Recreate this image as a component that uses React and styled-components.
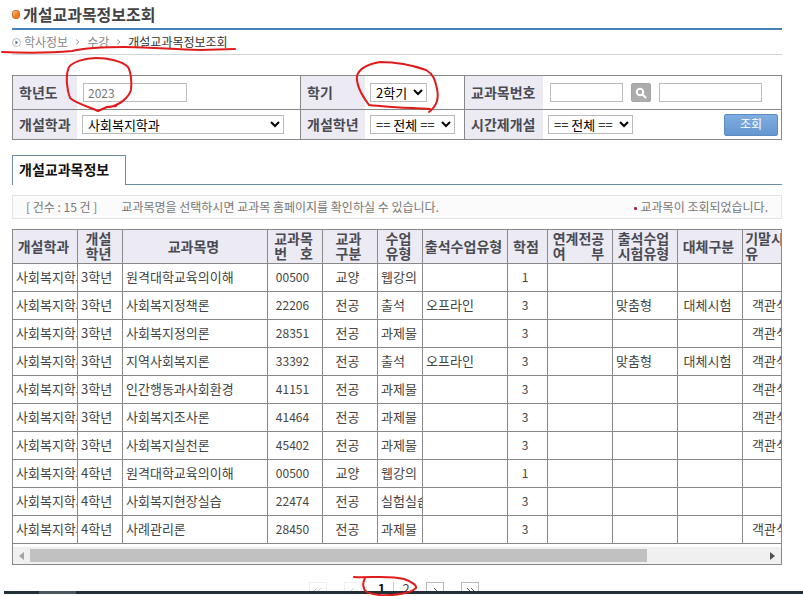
import React from 'react';
import styled, { createGlobalStyle } from 'styled-components';

const GlobalStyle = createGlobalStyle`
    * { box-sizing: border-box; }
    body {
        margin: 0;
        background: #fff;
        overflow: hidden;
    }
    body, input, select, button {
        font-family: "Noto Sans CJK KR", "Liberation Sans", sans-serif;
        font-size: 13px;
        line-height: 16px;
        color: #444;
    }
`;

const Page = styled.div`
    position: relative;
    height: 100vh;
    overflow: hidden;
`;

const Content = styled.main`
    padding: 0 21px 0 12px;
`;

const Title = styled.h1`
    display: flex;
    align-items: center;
    gap: 3px;
    height: 30px;
    margin: 0;
    border-bottom: 2px solid #4680b8;
    font-size: 16px;
    line-height: 28px;
    color: #444;
`;

const Bullet = styled.i`
    width: 8px;
    height: 9px;
    border: 1px solid #c8702c;
    border-radius: 3px;
    background: linear-gradient(135deg, #ffc48a, #ee7c22 60%);
`;

const Breadcrumb = styled.nav`
    display: flex;
    align-items: center;
    gap: 7px;
    height: 25px;
    border-bottom: 1px solid #d5d5d5;
    font-size: 12px;
    color: #888;

    a { color: inherit; text-decoration: none; }
    svg { flex: none; }
    > svg:first-child { margin-right: -4px; }
    strong { font-weight: normal; color: #333; }
`;

const SearchForm = styled.form`
    display: grid;
    grid-template-columns: 64px 223px 1px 64px 100px 78px 1fr;
    grid-template-rows: 33px 29px;
    row-gap: 1px;
    margin-top: 20px;
    border: 1px solid #888;
    background: linear-gradient(#888, #888) 0 33px / 100% 1px no-repeat;
`;

const Label = styled.label`
    display: flex;
    align-items: center;
    padding: 0 0 2px 6px;
    background: #ecebf4;
    font-size: 14px;
    font-weight: bold;
    white-space: nowrap;
    color: #4a4a52;
`;

const Field = styled.div`
    display: flex;
    align-items: center;
    gap: 8px;
    padding: 0 3px 0 ${p => p.$pad || 5}px;
    border-right: ${p => (p.$last ? 'none' : '1px solid #888')};
    ${p => p.$wide && 'grid-column: span 2;'}
`;

const TextBox = styled.input`
    width: ${p => p.$w}px;
    height: 19px;
    padding: 0 4px;
    border: 1px solid #bbb;
    font-size: 12px;
    color: #777;
`;

const SelectBox = styled.div`
    position: relative;
    width: ${p => p.$w}px;
    height: 19px;

    select {
        appearance: none;
        display: block;
        width: 100%;
        height: 19px;
        padding: 0 0 0 5px;
        border: 1px solid #bbb;
        border-radius: 0;
        background: #fff;
        line-height: 16px;
        color: #000;
    }

    svg {
        position: absolute;
        top: 6px;
        right: 4px;
        pointer-events: none;
    }
`;

const IconButton = styled.button`
    display: flex;
    align-items: center;
    justify-content: center;
    width: 20px;
    height: 19px;
    padding: 0;
    border: 1px solid #a5a5a5;
    border-radius: 2px;
    background: #adadad;
`;

const SubmitButton = styled.button`
    width: 54px;
    height: 22px;
    margin-left: auto;
    padding: 0 0 2px;
    border: 1px solid #5b8cc4;
    border-radius: 2px;
    background: linear-gradient(#7fade0, #6497d0);
    font-size: 12px;
    color: #fff;
`;

const TabBar = styled.div`
    display: flex;
    margin-top: 15px;

    &::after {
        content: '';
        flex: 1;
        border-bottom: 1px solid #6d8ba3;
    }
`;

const Tab = styled.button`
    width: 114px;
    height: 30px;
    padding: 0 0 4px 6px;
    border: 1px solid #6d8ba3;
    border-bottom: none;
    background: #fff;
    text-align: left;
    white-space: nowrap;
    font-size: 14px;
    font-weight: bold;
    color: #111;
`;

const InfoBar = styled.div`
    display: flex;
    align-items: center;
    gap: 24px;
    height: 24px;
    margin: 10px 0;
    padding: 0 13px;
    border: 1px solid #e4e4e4;
    background: #fbfbfb;
    white-space: nowrap;
    font-size: 12px;
    color: #777;
`;

const Message = styled.span`
    margin-left: auto;

    &::before {
        content: '';
        display: inline-block;
        width: 3px;
        height: 3px;
        margin-right: 4px;
        vertical-align: middle;
        border-radius: 1px;
        background: #a8284a;
    }
`;

const Grid = styled.div`
    border: 1px solid #888;
    overflow: hidden;
`;

const Table = styled.table`
    table-layout: fixed;
    width: 790px;
    border-collapse: separate;
    border-spacing: 0;
`;

const Th = styled.th`
    height: 34px;
    padding: 0 3px 2px 0;
    border-right: 1px solid #888;
    border-bottom: 1px solid #888;
    background: #ecebf4;
    font-size: 14px;
    line-height: 15px;
    white-space: nowrap;
    overflow: hidden;
    color: #4a4a52;

    span {
        display: inline-block;
        vertical-align: middle;
        white-space: pre-line;
        text-align-last: justify;
    }
`;

const Td = styled.td`
    height: 28px;
    padding: ${p => (p.$center ? '0 5px 1px 0' : '0 0 1px 3px')};
    border-right: 1px solid #888;
    border-bottom: 1px solid #888;
    text-align: ${p => (p.$center ? 'center' : 'left')};
    font-size: ${p => (p.$code ? 12 : 13)}px;
    white-space: nowrap;
    overflow: hidden;
`;

const ScrollBar = styled.div`
    display: flex;
    align-items: center;
    height: 17px;
    margin-top: 3px;
    background: #f0f0f0;
`;

const ScrollTrack = styled.div`
    flex: 1;
    height: 13px;
`;

const ScrollThumb = styled.div`
    width: 84%;
    height: 100%;
    background: #c1c1c1;
`;

const ScrollButton = styled.button`
    display: flex;
    align-items: center;
    justify-content: center;
    width: 17px;
    height: 17px;
    padding: 0;
    border: none;
    background: none;
`;

const Pager = styled.nav`
    display: flex;
    justify-content: center;
    height: 9px;
    margin-top: 17px;
    padding-right: 6px;
    overflow: hidden;
`;

const PageArrow = styled.button`
    width: 18px;
    height: 18px;
    margin-right: ${p => p.$gap || 0}px;
    padding: 0;
    flex: none;
    border: 1px solid ${p => (p.disabled ? '#eee' : '#bbb')};
    background: #fff;
    line-height: 0;
    color: ${p => (p.disabled ? '#ccc' : '#555')};
`;

const PageLinks = styled.div`
    display: flex;
    margin-right: 8px;
`;

const PageLink = styled.a`
    width: 24px;
    height: 18px;
    line-height: 14px;
    text-align: center;
    text-decoration: none;
    color: ${p => (p.$current ? '#111' : '#444')};
    font-weight: ${p => (p.$current ? 'bold' : 'normal')};
    border-right: ${p => (p.$current ? '1px solid #ccc' : 'none')};
`;

const TaskBar = styled.div`
    display: flex;
    height: 3px;
    margin-left: 4px;
    padding-left: 35px;
    background: #232f36;

    &::before {
        content: '';
        width: 37px;
        background: #4c565d;
    }
`;

const Marks = styled.svg`
    position: absolute;
    top: 0;
    left: 0;
    pointer-events: none;
`;

const COLUMNS = [
    { key: 'dept', title: '개설학과', width: 65 },
    { key: 'year', title: '개설\n학년', width: 45 },
    { key: 'name', title: '교과목명', width: 145 },
    { key: 'code', title: '교과목\n번 호', width: 55, center: true, code: true },
    { key: 'kind', title: '교과\n구분', width: 55, center: true },
    { key: 'type', title: '수업\n유형', width: 45 },
    { key: 'attend', title: '출석수업유형', width: 85 },
    { key: 'credit', title: '학점', width: 40, center: true, code: true },
    { key: 'linked', title: '연계전공\n여 부', width: 65 },
    { key: 'exam', title: '출석수업\n시험유형', width: 65 },
    { key: 'sub', title: '대체구분', width: 65, center: true },
    { key: 'final', title: '기말시험\n유 형', width: 60, center: true },
];

const D = '사회복지학과';
const ROWS = [
    { dept: D, year: '3학년', name: '원격대학교육의이해', code: '00500', kind: '교양', type: '웹강의', credit: 1 },
    { dept: D, year: '3학년', name: '사회복지정책론', code: '22206', kind: '전공', type: '출석', attend: '오프라인', credit: 3, exam: '맞춤형', sub: '대체시험', final: '객관식' },
    { dept: D, year: '3학년', name: '사회복지정의론', code: '28351', kind: '전공', type: '과제물', credit: 3, final: '객관식' },
    { dept: D, year: '3학년', name: '지역사회복지론', code: '33392', kind: '전공', type: '출석', attend: '오프라인', credit: 3, exam: '맞춤형', sub: '대체시험', final: '객관식' },
    { dept: D, year: '3학년', name: '인간행동과사회환경', code: '41151', kind: '전공', type: '과제물', credit: 3, final: '객관식' },
    { dept: D, year: '3학년', name: '사회복지조사론', code: '41464', kind: '전공', type: '과제물', credit: 3, final: '객관식' },
    { dept: D, year: '3학년', name: '사회복지실천론', code: '45402', kind: '전공', type: '과제물', credit: 3, final: '객관식' },
    { dept: D, year: '4학년', name: '원격대학교육의이해', code: '00500', kind: '교양', type: '웹강의', credit: 1 },
    { dept: D, year: '4학년', name: '사회복지현장실습', code: '22474', kind: '전공', type: '실험실습', credit: 3 },
    { dept: D, year: '4학년', name: '사례관리론', code: '28450', kind: '전공', type: '과제물', credit: 3, final: '객관식' },
];

function Chevron({ double, left }) {
    const d = double ? 'M2 1l3 3-3 3M6 1l3 3-3 3' : 'M4 1l3 3-3 3';
    return (
        <svg width="10" height="8" viewBox="0 0 10 8" fill="none" stroke="currentColor">
            <path d={d} transform={left ? 'matrix(-1 0 0 1 10 0)' : undefined} />
        </svg>
    );
}

function CrumbArrow() {
    return (
        <svg width="5" height="6" viewBox="0 0 5 6" fill="none" stroke="#999">
            <path d="M1 0.5l3 2.5-3 2.5" />
        </svg>
    );
}

function Select({ id, width, option }) {
    return (
        <SelectBox $w={width}>
            <select id={id}><option>{option}</option></select>
            <svg width="10" height="7" viewBox="0 0 10 7" fill="none" stroke="#000" strokeWidth="2">
                <path d="M1 1l4 4 4-4" />
            </svg>
        </SelectBox>
    );
}

export default function App() {
    return (
        <Page>
            <GlobalStyle />
            <Content>
                <Title><Bullet />개설교과목정보조회</Title>
                <Breadcrumb>
                    <svg width="9" height="9" viewBox="0 0 9 9">
                        <circle cx="4.5" cy="4.5" r="4" fill="#fff" stroke="#b5bcc4" />
                        <path d="M3.5 2.5l2.5 2-2.5 2z" fill="#3d6a94" />
                    </svg>
                    <a href="#info">학사정보</a>
                    <CrumbArrow />
                    <a href="#course">수강</a>
                    <CrumbArrow />
                    <strong>개설교과목정보조회</strong>
                </Breadcrumb>

                <SearchForm onSubmit={e => e.preventDefault()}>
                    <Label htmlFor="year">학년도</Label>
                    <Field $wide $pad={6}><TextBox id="year" $w={104} defaultValue="2023" /></Field>
                    <Label htmlFor="term">학기</Label>
                    <Field><Select id="term" width={57} option="2학기" /></Field>
                    <Label htmlFor="code">교과목번호</Label>
                    <Field $last $pad={7}>
                        <TextBox id="code" $w={73} />
                        <IconButton type="button" aria-label="검색">
                            <svg width="12" height="12" viewBox="0 0 12 12" fill="none" stroke="#fff" strokeWidth="2">
                                <circle cx="5" cy="5" r="3.2" />
                                <path d="M7.5 7.5l3 3" strokeLinecap="round" />
                            </svg>
                        </IconButton>
                        <TextBox aria-label="교과목명" $w={103} />
                    </Field>

                    <Label htmlFor="dept">개설학과</Label>
                    <Field $wide><Select id="dept" width={202} option="사회복지학과" /></Field>
                    <Label htmlFor="grade">개설학년</Label>
                    <Field><Select id="grade" width={85} option="== 전체 ==" /></Field>
                    <Label htmlFor="part">시간제개설</Label>
                    <Field $last>
                        <Select id="part" width={85} option="== 전체 ==" />
                        <SubmitButton type="submit">조회</SubmitButton>
                    </Field>
                </SearchForm>

                <TabBar><Tab type="button">개설교과목정보</Tab></TabBar>

                <InfoBar>
                    <span>[ 건수 : 15 건 ]</span>
                    <span>교과목명을 선택하시면 교과목 홈페이지를 확인하실 수 있습니다.</span>
                    <Message>교과목이 조회되었습니다.</Message>
                </InfoBar>

                <Grid>
                    <Table>
                        <colgroup>
                            {COLUMNS.map(c => <col key={c.key} width={c.width} />)}
                        </colgroup>
                        <thead>
                            <tr>{COLUMNS.map(c => <Th key={c.key}><span>{c.title}</span></Th>)}</tr>
                        </thead>
                        <tbody>
                            {ROWS.map(row => (
                                <tr key={row.year + row.code}>
                                    {COLUMNS.map(c => (
                                        <Td key={c.key} $center={c.center} $code={c.code}>{row[c.key]}</Td>
                                    ))}
                                </tr>
                            ))}
                        </tbody>
                    </Table>
                    <ScrollBar>
                        <ScrollButton type="button" aria-label="왼쪽">
                            <svg width="5" height="8" viewBox="0 0 5 8"><path d="M5 0v8L0 4z" fill="#a3a3a3" /></svg>
                        </ScrollButton>
                        <ScrollTrack><ScrollThumb /></ScrollTrack>
                        <ScrollButton type="button" aria-label="오른쪽">
                            <svg width="5" height="8" viewBox="0 0 5 8"><path d="M0 0v8l5-4z" fill="#505050" /></svg>
                        </ScrollButton>
                    </ScrollBar>
                </Grid>

                <Pager>
                    <PageArrow disabled aria-label="처음" $gap={17}><Chevron double left /></PageArrow>
                    <PageArrow disabled aria-label="이전" $gap={8}><Chevron left /></PageArrow>
                    <PageLinks>
                        <PageLink href="#1" $current>1</PageLink>
                        <PageLink href="#2">2</PageLink>
                    </PageLinks>
                    <PageArrow aria-label="다음" $gap={17}><Chevron /></PageArrow>
                    <PageArrow aria-label="마지막"><Chevron double /></PageArrow>
                </Pager>
            </Content>
            <TaskBar />

            {/* red pen marks */}
            <Marks width="803" height="596" viewBox="0 0 803 596" fill="none" stroke="#e01b1b" strokeWidth="2" strokeLinecap="round" strokeLinejoin="round">
                <path d="M2 52C25 53 50 53 72 51C85 48 105 47 125 47C155 47 175 50 200 50L235 49" />
                <path d="M110 107C120 105 129 97 131 90C132 83 131 72 128 67C122 61 108 58 96 58C84 58 73 62 69 67C65 76 67 90 70 98C77 104 90 107 98 111L107 107L116 106" />
                <path d="M429 112C437 106 439 98 437 89C435 79 433 74 426 70C412 65 395 62 380 62C368 64 359 69 357 76C356 85 363 97 369 105C385 107 410 108 430 109" />
                <path d="M354 577C368 578 390 575 404 579C413 582 417 586 416 588C411 593 395 596 380 595C370 594 364 592 364 588C362 584 364 580 365 578" />
            </Marks>
        </Page>
    );
}
